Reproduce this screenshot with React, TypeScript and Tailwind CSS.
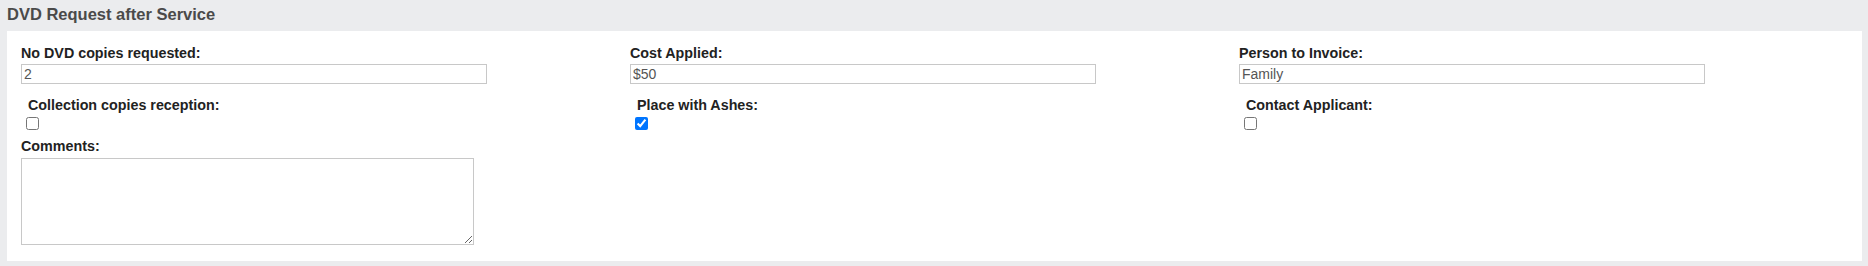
import React from 'react';

const TextField = ({ label, value }: { label: string; value: string }) => (
  <div className="flex flex-col">
    <label className="text-[14.3px] leading-[16px] font-bold text-[#222]">{label}</label>
    <input
      type="text"
      defaultValue={value}
      className="mt-[3px] h-[20px] w-[466px] border border-[#c8c8c8] px-[2px] text-[14px] text-[#555] outline-none"
    />
  </div>
);

const CheckField = ({ label, checked }: { label: string; checked?: boolean }) => (
  <div className="flex flex-col">
    <label className="pl-[7px] text-[14.3px] leading-[16px] font-bold text-[#222]">{label}</label>
    <input
      type="checkbox"
      defaultChecked={checked}
      className="mt-[4px] ml-[5px] h-[13px] w-[13px] accent-[#0075ff]"
    />
  </div>
);

const App = () => {
  return (
    <div className="min-h-[266px] bg-[#ebecee] pl-[7px] pr-[6px] pb-[5px] font-['Liberation_Sans',Arial,sans-serif]">
      <h2 className="h-[31px] text-[16.5px] leading-[29px] font-bold text-[#4a4a4a]">DVD Request after Service</h2>

      <div className="h-[230px] bg-white px-[14px] pt-[14px] pb-[16px]">
        <div className="grid grid-cols-3">
          <TextField label="No DVD copies requested:" value="2" />
          <TextField label="Cost Applied:" value="$50" />
          <TextField label="Person to Invoice:" value="Family" />
        </div>

        <div className="mt-[13px] grid grid-cols-3">
          <CheckField label="Collection copies reception:" />
          <CheckField label="Place with Ashes:" checked />
          <CheckField label="Contact Applicant:" />
        </div>

        <div className="mt-[8px] flex flex-col">
          <label className="text-[14.3px] leading-[16px] font-bold text-[#222]">Comments:</label>
          <textarea className="mt-[4px] h-[87px] w-[453px] border border-[#c8c8c8] p-[2px] text-[14px] outline-none" />
        </div>
      </div>
    </div>
  );
};

export default App;
